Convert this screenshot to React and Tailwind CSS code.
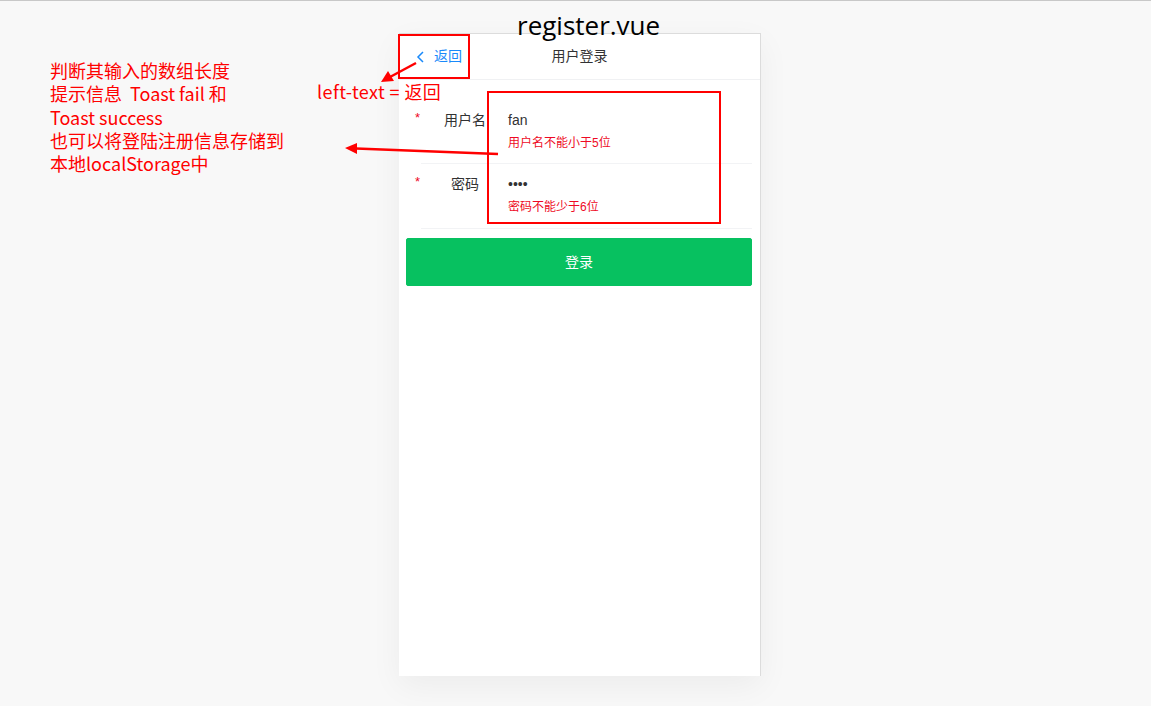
import React from "react";

const cjk = { fontFamily: '"Liberation Sans", "Noto Sans CJK SC", sans-serif' };
const note = { fontFamily: '"Noto Sans CJK SC", sans-serif' };

function Field({ label, value, error, first }) {
  return (
    <div className={first ? "pt-[20px]" : ""}>
      <div className={"flex flex-col pt-[8px] " + (first ? "pb-[11px]" : "pb-[12px]")}>
        <div className="flex items-center h-6">
          <span className="w-[10px] ml-[9px] text-[#ee0a24] text-[13px] leading-6 -mt-[4px]">*</span>
          <span className="w-[80px] text-center text-[14px] text-[#323233] leading-6">{label}</span>
          <span className="ml-[3px] text-[14px] text-[#323233] leading-6">{value}</span>
        </div>
        <div className="mt-[2px] ml-[102px] text-[12px] leading-[18px] text-[#ee0a24]">{error}</div>
      </div>
      <div className="ml-[15px] h-px bg-[#f2f3f5]" />
    </div>
  );
}

export default function App() {
  return (
    <div className="relative w-[1151px] h-[706px] overflow-hidden bg-[#f8f8f8] border-t border-[#c8c8c8]" style={cjk}>
      <div
        className="absolute left-[517px] top-[7px] text-[26px] leading-[34px] text-black"
        style={{ fontFamily: '"Open Sans", "Noto Sans", sans-serif' }}
      >
        register.vue
      </div>

      <div className="ml-[399px] mt-[32px] w-[362px] h-[643px] bg-white border-t border-r border-[#dcdcdc] shadow-[0_10px_30px_rgba(0,0,0,0.05)] flex flex-col">
        <div className="relative h-[46px] border-b border-[#f0f1f3] flex items-center justify-center">
          <div className="absolute left-[16px] top-0 h-full flex items-center text-[#1989fa] text-[14px]">
            <svg width="12" height="14" viewBox="0 0 12 14" className="mr-[7px]">
              <path d="M8 2 L3 7 L8 12" fill="none" stroke="#1989fa" strokeWidth="1.5" />
            </svg>
            <span>返回</span>
          </div>
          <span className="text-[14px] text-[#323233]">用户登录</span>
        </div>

        <div className="ml-[7px] w-[346px]">
          <Field first label="用户名" value="fan" error="用户名不能小于5位" />
          <Field label="密码" value="••••" error="密码不能少于6位" />
          <button className="mt-[9px] w-full h-[48px] bg-[#07c160] rounded-[2px] text-white text-[14px] border border-[#07c160]">
            登录
          </button>
        </div>
      </div>

      {/* annotations */}
      <div className="absolute left-[398px] top-[33px] w-[72px] h-[45px] border-2 border-[#ff0000]" />
      <div className="absolute left-[487px] top-[90px] w-[234px] h-[133px] border-2 border-[#ff0000]" />

      <div className="absolute left-[50px] top-[58px] text-[#ff0000] text-[18px] leading-[23.3px]" style={note}>
        <div>判断其输入的数组长度</div>
        <div>提示信息&nbsp;&nbsp;Toast fail 和</div>
        <div>Toast success</div>
        <div>也可以将登陆注册信息存储到</div>
        <div>本地localStorage中</div>
      </div>
      <div className="absolute left-[317px] top-[79px] text-[#ff0000] text-[18px] leading-[23px] tracking-[0.4px]" style={note}>
        left-text = 返回
      </div>

      <svg className="absolute left-0 top-0 pointer-events-none" width="1151" height="706">
        <line x1="416" y1="62" x2="390" y2="76" stroke="#ff0000" strokeWidth="2.5" />
        <polygon points="381,81 388,70 394,80" fill="#ff0000" />
        <line x1="498" y1="153" x2="356" y2="147.5" stroke="#ff0000" strokeWidth="2.5" />
        <polygon points="345,147 357,142 357,153" fill="#ff0000" />
      </svg>
    </div>
  );
}
